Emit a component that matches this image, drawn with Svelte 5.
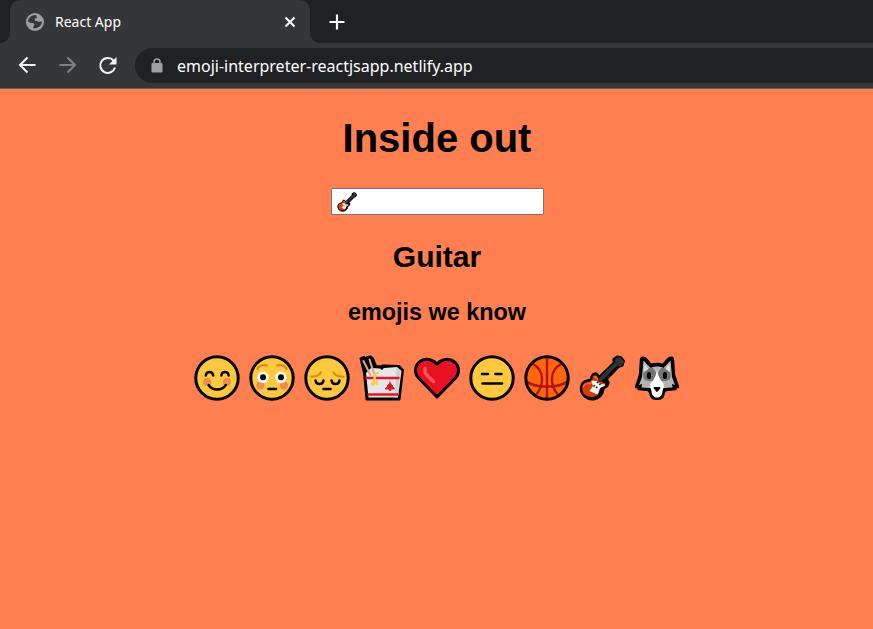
<script>
  const emojis = [
    { id: 'blush', name: 'Smiling' },
    { id: 'flushed', name: 'Flushed' },
    { id: 'pensive', name: 'Pensive' },
    { id: 'takeout', name: 'Takeout box' },
    { id: 'heart', name: 'Heart' },
    { id: 'flat', name: 'Expressionless' },
    { id: 'ball', name: 'Basketball' },
    { id: 'guitar', name: 'Guitar' },
    { id: 'wolf', name: 'Wolf' }
  ];
  let meaning = $state('Guitar');
  let picked = $state('guitar');
  let address = $state('emoji-interpreter-reactjsapp.netlify.app');

  function pick(emoji) {
    picked = emoji.id;
    meaning = emoji.name;
  }
</script>

{#snippet art(id)}
  <svg class="art" viewBox="0 0 46 46" fill="none" stroke-linecap="round" stroke-linejoin="round" aria-hidden="true">
    {#if ['blush', 'flushed', 'pensive', 'flat'].includes(id)}
      <circle cx="23" cy="23" r="21.2" fill="#ffc83d" stroke="#000" stroke-width="3" />
    {/if}
    {#if id === 'blush'}
      <g fill="#f28a4c"><circle cx="13.2" cy="27" r="4" /><circle cx="33" cy="27" r="4" /></g>
      <path d="M11.800 20.500c.8-4.600 6.600-4.600 7.400 0M27.300 20.500c.8-4.600 6.600-4.600 7.400 0M14.600 30c3.700 6 13.400 6 17.200 0" stroke="#000" stroke-width="2.400" />
    {:else if id === 'flushed'}
      <g fill="#f28a4c"><circle cx="11.300" cy="30.500" r="4" /><circle cx="35" cy="30.500" r="4" /></g>
      <path d="M8.500 14c1.500-3 5-4.500 9.500-3.500M28 10.500c4.500-1 8 .5 9.500 3.500" stroke="#d68f0c" stroke-width="2.200" />
      <g fill="#fff"><circle cx="14" cy="22.300" r="5.800" /><circle cx="32" cy="22.300" r="5.800" /></g>
      <g fill="#000"><circle cx="14" cy="22.300" r="3" /><circle cx="32" cy="22.300" r="3" /></g>
      <path d="M19.500 34h7.500" stroke="#000" stroke-width="2.600" />
    {:else if id === 'pensive'}
      <path d="M7 21.500c4 .3 8-1 9.800-4M29.500 17.500c1.800 3 5.800 4.300 9.800 4" stroke="#d68f0c" stroke-width="2.200" />
      <path d="M11.500 25.500c.8 4.700 7.200 4.700 8 0M27.500 25.500c.8 4.700 7.200 4.700 8 0" stroke="#000" stroke-width="2.400" />
      <path d="M19.500 34h7" stroke="#000" stroke-width="2.600" />
    {:else if id === 'takeout'}
      <path d="M1.500 3.500L5 2l3 3V2l3.500-.5 2.500 2 3 7.500 5 .5 2-1 16 .5 4 4-3.500 29.500H7.500L5 18Z" fill="#000" stroke="#000" stroke-width="2" />
      <path d="M7 18l5-5 9 .5 2 1.500 2-2 13-1 4.500 4-3.500 26.500H9.500Z" fill="#e6e6e6" />
      <path d="M37 13l4.500 3-3.500 26.500h-1.500Z" fill="#cfcfcf" />
      <path d="M4.500 6l7 14M10.500 4.500l4.500 14" stroke="#d8ab88" stroke-width="2" />
      <path d="M6.500 23h34M8.500 39.500h30.500" stroke="#e81224" stroke-width="2.400" stroke-linecap="butt" />
      <path d="M19 18c-5 0-4 3-3.500 6.500S11 28 13 29.500c2 1 3-1 3-2.500M16 19.500v5M18 26v3" stroke="#ffc83d" stroke-width="1.800" />
      <path d="M31 27l1 2 2 2h-1l3 3h-4v1.500h-2V34h-4l3-3h-1l2-2Z" fill="#e81224" stroke="#e81224" stroke-width=".8" />
    {:else if id === 'heart'}
      <path d="M23 42L4.500 23C-1 17 1.500 8 8.500 5.200 14 3 20 5.500 23 9c3-3.500 9-6 14.500-3.800C44.500 8 47 17 41.500 23Z" fill="#e81224" stroke="#000" stroke-width="3" />
      <path d="M11 13.500v4l3 4 5.500 5" stroke="#f05c4c" stroke-width="3.400" />
    {:else if id === 'flat'}
      <path d="M13 19h6M26.500 19h6M13.500 28.500h19.500" stroke="#000" stroke-width="2.600" />
    {:else if id === 'ball'}
      <circle cx="23" cy="23" r="21.200" fill="#ff6608" />
      <path d="M23 2v42M2 26c9 7.500 33 7.500 42 0M9 9c11 6 12 20 3 31M37 9c-11 6-12 20-3 31" stroke="#b51216" stroke-width="2.400" />
      <circle cx="23" cy="23" r="21.200" stroke="#000" stroke-width="3" />
    {:else if id === 'guitar'}
      <path d="M20 22L34.500 8l0-4L38 1.500l4 .5 3 4-1.500 4.500-4 1.500L27 25c4 1 3 6-1 7.500-3 2-1 5-4 8-7 8-22 3-20-9 1-6 6-6 10-7 0-6 5-9 8-2.500Z" fill="#000" stroke="#000" stroke-width="2" />
      <path d="M20 25l-2-4c-4-2-5 1-4.500 5-5 1-9 1-10 6-2 8 8 13 15 8 3-3 1-7 5-9l3-2Z" fill="#da3b01" />
      <path d="M4 32c1-4 4-3 8-4M15 22c2-1 3 1 4 3" stroke="#ff6723" stroke-width="1.300" />
      <path d="M12 25.500l6 .5 4 3 4 .5c1 1-1 2-3 2.500-4 2-2 4-4.500 7.500L10.500 36l3.500-5Z" fill="#f2f2f2" />
      <path d="M21 25L38.500 7.500M38.500 5l1.500-1 3 3-2 2.500-3-2Z" stroke="#303234" stroke-width="4" />
      <path d="M14.500 30.500l5 3M18 27l4 3" stroke="#111" stroke-width="1.800" stroke-dasharray="1.500 1.500" stroke-linecap="butt" />
    {:else if id === 'wolf'}
      <path d="M7 5c0-3 3-3 5-1l5 6c3-1.500 9-1.500 12 0l5-6c2-2 5-2 5 1l1 15 4 12-3-.5.5 2.500-10 1c-1 2-2 2-2 4-1 6.500-12 6.500-13 0 0-2-1-2-2-4l-10-1 .5-2.500L2 32l4-12Z" fill="#000" stroke="#000" stroke-width="2.400" />
      <path d="M9.500 5.500l7 7.500c4-2 9-2 13 0l7-7.500L38 22l3 8-3-1 .5 3.500-8 .5h-15l-8-.5.500-3.500-3 1 3-8Z" fill="#b4b4b4" />
      <path d="M10 17c2-3 5-4 8.500-4.500L23 19l4.500-6.500C31 13 34 14 36 17c2 5 0 9-5 9H15c-5 0-7-4-5-9Z" fill="#737373" />
      <path d="M10.500 9l4 5-4.500 3ZM35.500 9l-4 5 4.500 3Z" fill="#dedede" />
      <path d="M23 15c1 6 3 9 6 13 2 3 0 5-.5 8.500-.5 8-10.500 8-11 0C17 33 15 31 17 28c3-4 5-7 6-13Z" fill="#fff" />
      <path d="M15 19v3M31 19v3" stroke="#000" stroke-width="4" />
      <path d="M20.500 33h5L23 36Z" fill="#000" stroke="#000" stroke-width="1.800" />
    {/if}
  </svg>
{/snippet}

<div class="browser">
  <header>
    <div class="tabs">
      <div class="tab">
        <svg class="globe" viewBox="0 0 18 18" aria-hidden="true">
          <circle cx="9" cy="9" r="9" fill="#9aa0a6" />
          <path d="M10 2c-4 0-7 2-8 6 1 2 3 2 5 2 1 0 1 2 2 2 2 0 2-2 4-2 0-2-2-2-4-2-1-2 0-3 2-3ZM7 15c4 1 8-1 9-6-2-1-3 0-4 1s-1 2-3 2-1 2-2 3Z" fill="#35363a" />
        </svg>
        <span class="title">React App</span>
        <button class="close" aria-label="Close tab">
          <svg width="12" height="12" viewBox="0 0 12 12" stroke="#fff" stroke-width="2"><path d="M1.500 1.500l9 9M10.500 1.500l-9 9" /></svg>
        </button>
      </div>
      <button class="new" aria-label="New tab">
        <svg width="16" height="16" viewBox="0 0 16 16" stroke="#fff" stroke-width="2.200"><path d="M8 .5v15M.5 8h15" /></svg>
      </button>
    </div>
    <nav class="toolbar" aria-label="Browser">
      <button class="nav" aria-label="Back">
        <svg width="20" height="20" viewBox="0 0 20 20" fill="none" stroke="#f1f3f4" stroke-width="2"><path d="M18.500 9H4M10.500 1.500L3 9l7.500 7.500" /></svg>
      </button>
      <button class="nav" aria-label="Forward">
        <svg width="20" height="20" viewBox="0 0 20 20" fill="none" stroke="#7f8184" stroke-width="2"><path d="M2.500 9H17M10.500 1.500L18 9l-7.500 7.500" /></svg>
      </button>
      <button class="nav" aria-label="Reload">
        <svg width="20" height="20" viewBox="0 0 20 20" fill="none" stroke="#f1f3f4" stroke-width="2"><path d="M16.500 4.500a7.500 7.500 0 1 0 1.500 7" /><path d="M19.500 1v7.500H12Z" fill="#f1f3f4" stroke="none" /></svg>
      </button>
      <div class="omnibox">
        <svg width="12" height="16" viewBox="0 0 12 16" aria-hidden="true"><rect y="5" x=".5" width="11" height="9.500" rx="1.200" fill="#9aa0a6" /><path d="M3 6V4a3 3 0 0 1 6 0v2" fill="none" stroke="#9aa0a6" stroke-width="1.500" /></svg>
        <input type="text" aria-label="Address" bind:value={address} />
      </div>
    </nav>
  </header>

  <main>
    <h1>Inside out</h1>
    <div class="field">
      <input type="text" aria-label="Emoji" />
      <span class="typed">{@render art(picked)}</span>
    </div>
    <h2>{meaning}</h2>
    <h3>emojis we know</h3>
    <div class="emojis">
      {#each emojis as emoji}
        <button aria-label={emoji.name} onclick={() => pick(emoji)}>{@render art(emoji.id)}</button>
      {/each}
    </div>
  </main>
</div>

<style>
  :global(body) {
    margin: 0;
    background: #ff7f50;
  }
  .browser {
    min-height: 100vh;
    display: flex;
    flex-direction: column;
  }
  svg {
    display: block;
  }
  button {
    padding: 0;
    border: 0;
    background: none;
    cursor: pointer;
  }
  header {
    background: #35363a;
    border-bottom: 1px solid #5b5d60;
    font-family: 'Noto Sans', 'Open Sans', sans-serif;
  }
  .tabs {
    display: flex;
    height: 43px;
    padding-left: 10px;
    background: #202124;
  }
  .tab {
    position: relative;
    box-sizing: border-box;
    width: 300px;
    display: flex;
    align-items: center;
    padding: 0 14px 0 16px;
    border-radius: 10px 10px 0 0;
    background: #35363a;
  }
  .tab::before,
  .tab::after {
    content: '';
    position: absolute;
    bottom: 0;
    width: 10px;
    height: 10px;
  }
  .tab::before {
    right: 100%;
    background: radial-gradient(circle at 0 0, #202124 10px, #35363a 10px);
  }
  .tab::after {
    left: 100%;
    background: radial-gradient(circle at 100% 0, #202124 10px, #35363a 10px);
  }
  .globe {
    width: 18px;
    height: 18px;
  }
  .title {
    flex: 1;
    margin-left: 11px;
    color: #fff;
    font-size: 14px;
    line-height: 20px;
  }
  .new {
    margin-left: 19px;
  }
  .toolbar {
    display: flex;
    align-items: center;
    height: 45px;
    padding-left: 17px;
  }
  .nav {
    width: 20px;
    margin-right: 20px;
  }
  .omnibox {
    flex: 1;
    display: flex;
    align-items: center;
    gap: 14px;
    height: 35px;
    padding-left: 16px;
    margin-left: -2px;
    border-radius: 18px 0 0 18px;
    background: #202124;
  }
  .omnibox input {
    flex: 1;
    min-width: 0;
    padding: 0;
    border: 0;
    outline: 0;
    background: none;
    color: #fff;
    font: 16px/24px 'Noto Sans', 'Open Sans', sans-serif;
  }
  main {
    flex: 1;
    display: flex;
    flex-direction: column;
    align-items: center;
    padding: 26px 8px 26px 9px;
    background: #ff7f50;
    color: #000;
    font-family: 'Liberation Sans', Arial, sans-serif;
    font-size: 20px;
  }
  h1,
  h2,
  h3 {
    margin: 0;
    text-align: center;
  }
  h1 {
    font-size: 2em;
    line-height: 46px;
  }
  .field {
    position: relative;
    margin: 27px 0 25px;
  }
  .field input {
    display: block;
    box-sizing: border-box;
    width: 213px;
    height: 27px;
    padding: 2px 4px;
    border: 1px solid #767676;
    border-radius: 1px;
    background: #fff;
    font: 17px 'Liberation Sans', Arial, sans-serif;
  }
  .typed {
    position: absolute;
    left: 6px;
    top: 4px;
    width: 20px;
    height: 20px;
    pointer-events: none;
  }
  h2 {
    font-size: 30px;
    line-height: 34px;
  }
  h3 {
    margin-top: 25px;
    font-size: 1.17em;
    line-height: 26px;
  }
  .emojis {
    display: flex;
    flex-wrap: wrap;
    justify-content: center;
    gap: 9px;
    margin-top: 30px;
  }
  .emojis button {
    width: 46px;
    height: 46px;
  }
  .art {
    width: 100%;
    height: 100%;
  }
</style>
